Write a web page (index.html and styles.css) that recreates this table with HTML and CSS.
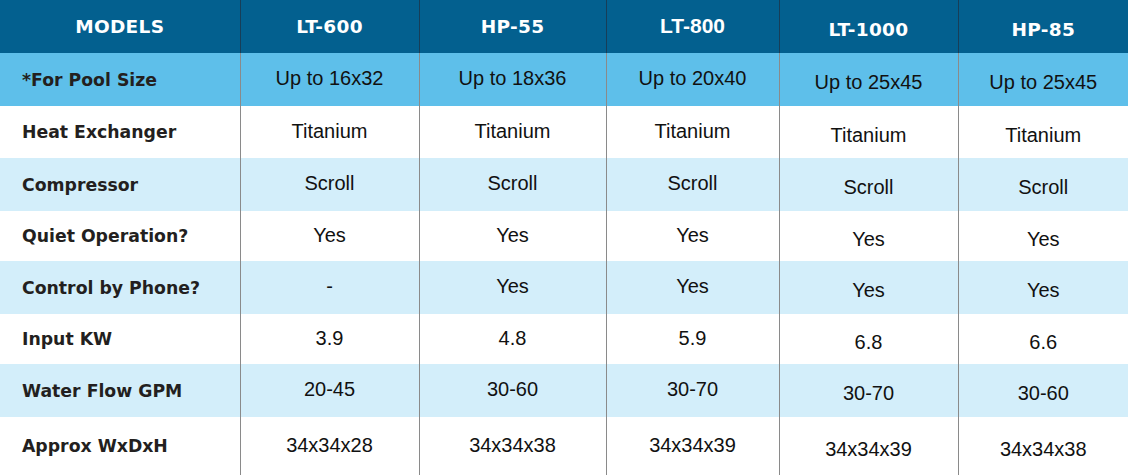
FILE: index.html
```html
<!DOCTYPE html>
<html lang="en">
<head>
<meta charset="utf-8">
<title>Heat Pump Models</title>
<link rel="stylesheet" href="styles.css">
</head>
<body>
<table class="spec">
  <colgroup>
    <col class="c-label">
    <col class="c-lt600">
    <col class="c-hp55">
    <col class="c-lt800">
    <col class="c-lt1000">
    <col class="c-hp85">
  </colgroup>
  <thead>
    <tr class="row-head">
      <th>MODELS</th>
      <th>LT-600</th>
      <th>HP-55</th>
      <th class="alt-font">LT-800</th>
      <th class="low">LT-1000</th>
      <th class="low">HP-85</th>
    </tr>
  </thead>
  <tbody>
    <tr class="row-sky h53">
      <th>*For Pool Size</th>
      <td>Up to 16x32</td>
      <td>Up to 18x36</td>
      <td>Up to 20x40</td>
      <td class="low">Up to 25x45</td>
      <td class="low">Up to 25x45</td>
    </tr>
    <tr class="row-white h52">
      <th>Heat Exchanger</th>
      <td>Titanium</td>
      <td>Titanium</td>
      <td>Titanium</td>
      <td class="low">Titanium</td>
      <td class="low">Titanium</td>
    </tr>
    <tr class="row-light h53">
      <th>Compressor</th>
      <td>Scroll</td>
      <td>Scroll</td>
      <td>Scroll</td>
      <td class="low">Scroll</td>
      <td class="low">Scroll</td>
    </tr>
    <tr class="row-white h50">
      <th>Quiet Operation?</th>
      <td>Yes</td>
      <td>Yes</td>
      <td>Yes</td>
      <td class="low">Yes</td>
      <td class="low">Yes</td>
    </tr>
    <tr class="row-light h53">
      <th>Control by Phone?</th>
      <td>-</td>
      <td>Yes</td>
      <td>Yes</td>
      <td class="low">Yes</td>
      <td class="low">Yes</td>
    </tr>
    <tr class="row-white h50">
      <th>Input KW</th>
      <td>3.9</td>
      <td>4.8</td>
      <td>5.9</td>
      <td class="low">6.8</td>
      <td class="low">6.6</td>
    </tr>
    <tr class="row-light h53">
      <th>Water Flow GPM</th>
      <td>20-45</td>
      <td>30-60</td>
      <td>30-70</td>
      <td class="low">30-70</td>
      <td class="low">30-60</td>
    </tr>
    <tr class="row-white h58">
      <th>Approx WxDxH</th>
      <td>34x34x28</td>
      <td>34x34x38</td>
      <td>34x34x39</td>
      <td class="low">34x34x39</td>
      <td class="low">34x34x38</td>
    </tr>
  </tbody>
</table>
</body>
</html>
```

FILE: styles.css
```css
html, body {
  margin: 0;
  padding: 0;
  background: #ffffff;
}

.spec {
  width: 1128px;
  table-layout: fixed;
  border-collapse: collapse;
  border-spacing: 0;
}

.c-label { width: 240px; }
.c-lt600 { width: 179px; }
.c-hp55 { width: 187px; }
.c-lt800 { width: 173px; }
.c-lt1000 { width: 179px; }
.c-hp85 { width: 170px; }

.spec th,
.spec td {
  padding: 0;
  vertical-align: middle;
}

.spec td,
.spec th + th {
  border-left: 1px solid #8a8a8a;
}

/* header row */
.row-head {
  height: 53px;
  background: #03608f;
}
.spec .row-head th {
  color: #ffffff;
  font-family: "DejaVu Sans", "Open Sans", sans-serif;
  font-weight: bold;
  font-size: 18.5px;
  text-align: center;
  letter-spacing: 0.3px;
  padding-bottom: 1px;
}
.spec .row-head th + th {
  border-left: 1px solid #173e58;
}
.spec .row-head th.alt-font {
  font-family: "Liberation Sans", Arial, sans-serif;
  font-size: 21px;
  letter-spacing: 0;
}

/* body rows */
.row-sky { background: #5ebfea; }
.row-light { background: #d3eefa; }
.row-white { background: #ffffff; }

.h50 { height: 50px; }
.h52 { height: 52px; }
.h53 { height: 53px; }
.h58 { height: 58px; }

.spec tbody th {
  text-align: left;
  padding-left: 22px;
  font-family: "DejaVu Sans", "Open Sans", sans-serif;
  font-weight: bold;
  font-size: 17.3px;
  color: #231f20;
  white-space: nowrap;
}

.spec tbody td {
  text-align: center;
  font-family: "Liberation Sans", Arial, sans-serif;
  font-size: 20px;
  color: #111111;
  padding-bottom: 2px;
}

.spec .low,
.spec .row-head th.low {
  padding-top: 6px;
  padding-bottom: 0;
}
```
